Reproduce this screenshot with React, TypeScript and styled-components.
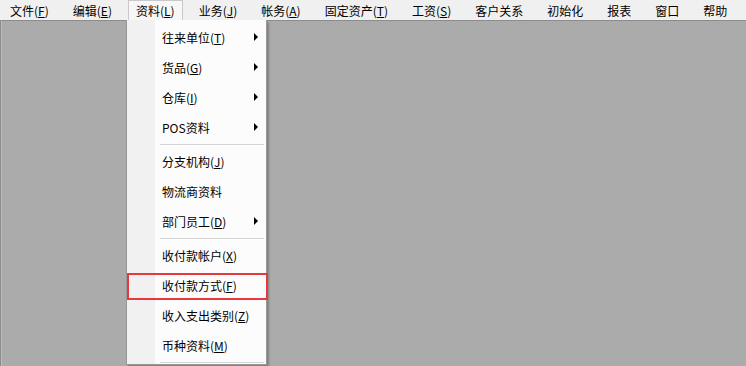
import React from "react";
import styled, { createGlobalStyle, css } from "styled-components";

const Global = createGlobalStyle`
  html, body { margin: 0; padding: 0; }
  body {
    width: 746px; height: 366px; overflow: hidden;
    font-family: "Noto Sans CJK SC", "Microsoft YaHei", "Noto Sans", sans-serif;
    font-size: 12px; color: #000;
    background: #ababab;
  }
`;

const Window = styled.div`
  width: 746px;
  height: 366px;
  display: flex;
  flex-direction: column;
  position: relative;
  overflow: hidden;
`;

const MenuBar = styled.div`
  height: 20px;
  display: flex;
  align-items: stretch;
  gap: 8px;
  padding-left: 2px;
  background: #f0f0f0;
  flex: none;
`;

const BarItem = styled.div<{ $active?: boolean }>`
  position: relative;
  display: flex;
  align-items: center;
  padding: 0 7px;
  line-height: 20px;
  white-space: nowrap;
  border: 1px solid transparent;
  border-bottom: none;
  ${(p) =>
    p.$active &&
    css`
      background: #f7f7f7;
      border-color: #c9c9c9;
    `}
`;

const Client = styled.div`
  flex: 1;
  background: #ababab;
  border-top: 1px solid #8c8c8c;
  border-left: 1px solid #8c8c8c;
  box-shadow: inset 1px 0 0 #bdbdbd;
`;

const Dropdown = styled.div`
  position: absolute;
  left: 126px;
  top: 20px;
  width: 139px;
  padding-top: 2px;
  display: flex;
  flex-direction: column;
  background: linear-gradient(to right, #f1f1f1 0, #f1f1f1 28px, #fcfcfc 28px);
  border: 1px solid #979797;
  border-top: none;
  box-shadow: 2px 2px 2px rgba(0, 0, 0, 0.25);
`;

const Item = styled.div<{ $marked?: boolean }>`
  position: relative;
  height: 30px;
  display: flex;
  align-items: center;
  padding-left: 35px;
  white-space: nowrap;
  ${(p) =>
    p.$marked &&
    css`
      &::after {
        content: "";
        position: absolute;
        left: 0;
        right: -2px;
        top: 3px;
        bottom: 0;
        border: 2px solid #e5393b;
      }
    `}
`;

const Arrow = styled.span`
  position: absolute;
  left: 127px;
  top: 11px;
  width: 0;
  height: 0;
  border-top: 4px solid transparent;
  border-bottom: 4px solid transparent;
  border-left: 4px solid #000;
`;

const Separator = styled.div`
  height: 4px;
  display: flex;
  align-items: center;
  padding-left: 33px;
  padding-right: 2px;
  &::before {
    content: "";
    flex: 1;
    height: 1px;
    background: #d4d4d4;
    box-shadow: 0 1px 0 #ffffff;
  }
`;

type Entry = { label: string; key?: string; sub?: boolean; marked?: boolean } | "sep";

const bar: { label: string; key?: string; active?: boolean }[] = [
  { label: "文件", key: "F" },
  { label: "编辑", key: "E" },
  { label: "资料", key: "L", active: true },
  { label: "业务", key: "J" },
  { label: "帐务", key: "A" },
  { label: "固定资产", key: "T" },
  { label: "工资", key: "S" },
  { label: "客户关系" },
  { label: "初始化" },
  { label: "报表" },
  { label: "窗口" },
  { label: "帮助" },
];

const entries: Entry[] = [
  { label: "往来单位", key: "T", sub: true },
  { label: "货品", key: "G", sub: true },
  { label: "仓库", key: "I", sub: true },
  { label: "POS资料", sub: true },
  "sep",
  { label: "分支机构", key: "J" },
  { label: "物流商资料" },
  { label: "部门员工", key: "D", sub: true },
  "sep",
  { label: "收付款帐户", key: "X" },
  { label: "收付款方式", key: "F", marked: true },
  { label: "收入支出类别", key: "Z" },
  { label: "币种资料", key: "M" },
  "sep",
];

const Label = ({ label, k }: { label: string; k?: string }) => (
  <span>
    {label}
    {k && (
      <>
        (<u>{k}</u>)
      </>
    )}
  </span>
);

export default function App() {
  return (
    <>
      <Global />
      <Window>
        <MenuBar>
          {bar.map((b) => (
            <BarItem key={b.label} $active={b.active}>
              <Label label={b.label} k={b.key} />
            </BarItem>
          ))}
        </MenuBar>
        <Client />
        <Dropdown>
          {entries.map((e, i) =>
            e === "sep" ? (
              <Separator key={i} />
            ) : (
              <Item key={i} $marked={e.marked}>
                <Label label={e.label} k={e.key} />
                {e.sub && <Arrow />}
              </Item>
            )
          )}
        </Dropdown>
      </Window>
    </>
  );
}
